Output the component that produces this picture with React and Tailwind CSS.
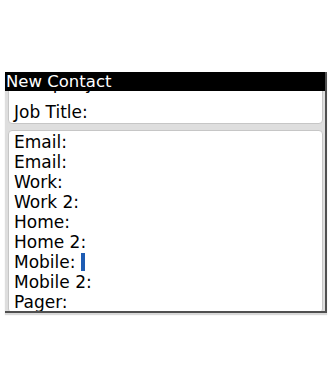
import React from "react";

const fields = [
  "Email:",
  "Email:",
  "Work:",
  "Work 2:",
  "Home:",
  "Home 2:",
  "Mobile:",
  "Mobile 2:",
  "Pager:",
];

const App = () => {
  return (
    <div
      className="w-[330px] h-[385px] bg-white pt-[72px] pl-[5px]"
      style={{ fontFamily: '"DejaVu Sans", sans-serif' }}
    >
      <div className="w-[322px] h-[241px] flex flex-col overflow-hidden bg-[#dedede] border-r-2 border-b-2 border-[#505050] shadow-[0_2px_1px_rgba(0,0,0,0.15)]">
        <div className="relative z-10 h-[19px] bg-black text-white text-[16.5px] leading-[19px] pl-[1px] -mr-[2px] shrink-0">
          New Contact
        </div>
        <div className="flex-1 overflow-hidden pl-[3px] pr-[2px] flex flex-col gap-[6px]">
          <div className="-mt-[30px] bg-white border border-[#c6c6c6] rounded-[4px] pl-[5px] pt-[2px] pb-[1px] text-[17px] text-black shrink-0">
            <div className="leading-[38px]">Company:</div>
            <div className="leading-[20px]">Job Title:</div>
          </div>
          <div className="bg-white border border-[#c6c6c6] rounded-[4px] pl-[5px] pt-[1px] text-[17px] leading-[20px] text-black shrink-0">
            {fields.map((f, i) => (
              <div key={i} className="flex items-center">
                <span>{f}</span>
                {f === "Mobile:" && (
                  <span className="ml-[5px] w-[4px] h-[18px] bg-[#1e5cb3]" />
                )}
              </div>
            ))}
          </div>
        </div>
      </div>
    </div>
  );
};

export default App;
